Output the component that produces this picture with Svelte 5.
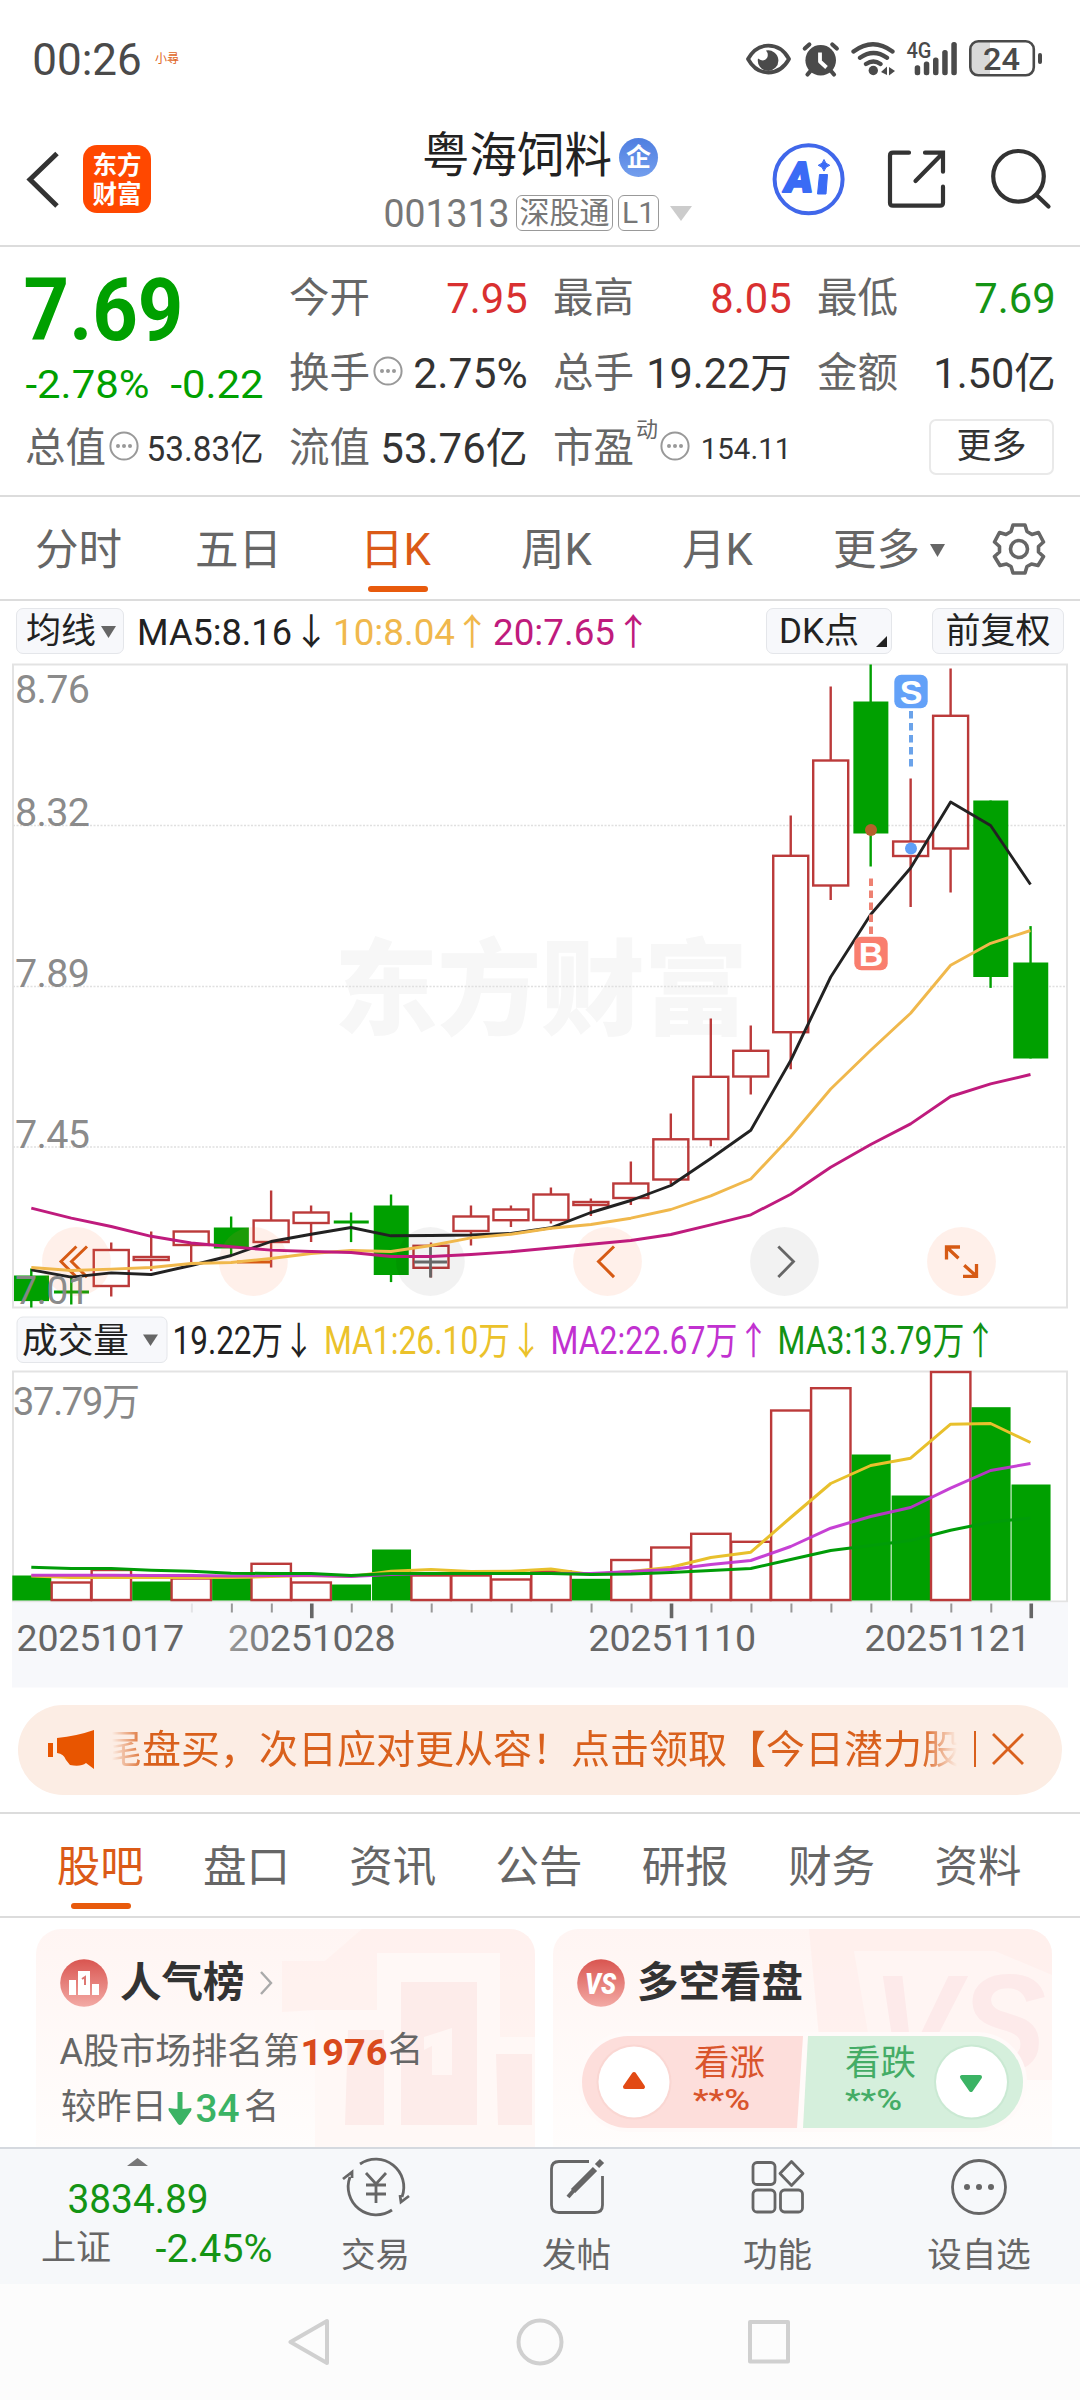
<script>
  const STEP = 39.97;
  const cx = (i) => 31.3 + STEP * i;

  // [high, top, bottom, low, rising]
  const candles = [
    [1268, 1275, 1300.6, 1307, 0], [1275, 1290, 1293, 1304, 0], [1242, 1249.5, 1285.5, 1296, 1],
    [1231, 1256.5, 1259.5, 1270.6, 1], [1231, 1231, 1244.5, 1262, 1], [1216, 1227, 1248, 1254.6, 0],
    [1190, 1220, 1241.5, 1267, 1], [1205, 1212, 1222.5, 1241.6, 1], [1212, 1220, 1223, 1241.6, 0],
    [1194, 1205, 1274.5, 1281.6, 0], [1242, 1245.3, 1267.3, 1277, 1], [1205, 1216, 1230.5, 1245, 1],
    [1205, 1209, 1219.7, 1226.5, 1], [1187, 1194, 1219.5, 1223, 1], [1198, 1201.5, 1204.5, 1215.5, 1],
    [1161, 1183, 1197.5, 1204.6, 1], [1113, 1138.8, 1179, 1183.6, 1], [1018, 1076.3, 1138.6, 1145.7, 1],
    [1025, 1050.3, 1076, 1094, 1], [815, 855.3, 1031.7, 1068.7, 1], [686, 760, 885, 899.5, 1],
    [664, 701, 833, 866, 0], [778, 841, 855.5, 906.6, 1], [668, 715.3, 848, 892, 1],
    [800, 800, 976.5, 987.4, 0], [925.6, 962, 1058, 1058, 0]
  ];
  const volumes = [1575, 1582, 1569.5, 1581, 1578, 1577.7, 1563.3, 1582, 1584, 1549, 1575, 1575, 1579, 1571, 1578.3, 1559.5, 1547, 1533.3, 1541.3, 1410, 1387.7, 1454, 1495, 1371.5, 1406.7, 1484];
  const sellDays = [0, 3, 5, 8, 9, 14, 21, 22, 24, 25];

  const ma5 = [1269.4, 1276.6, 1272.4, 1274, 1265, 1255, 1241, 1233.7, 1227, 1235.3, 1235, 1234.5, 1233, 1227.3, 1212, 1200, 1185, 1158, 1129.7, 1060, 976.5, 914, 867.5, 801.4, 825, 884];
  const ma10 = [1267, 1270, 1268.6, 1267, 1263, 1262, 1258, 1253, 1250, 1251, 1245, 1237.4, 1233.7, 1227.8, 1224, 1217.7, 1209, 1195.4, 1178.5, 1136, 1088.5, 1049.7, 1012.7, 964.7, 942.8, 930];
  const ma20 = [1207.6, 1217.7, 1226, 1235.8, 1242.5, 1246.3, 1249.6, 1251, 1252, 1256, 1256, 1254, 1251.3, 1247.5, 1243.8, 1240, 1234, 1224.4, 1214.3, 1193.7, 1166.7, 1144, 1123.4, 1096, 1083.4, 1074];
  const vol1 = [1575.5, 1577, 1577, 1577, 1577, 1577, 1576, 1575, 1576, 1570.7, 1569, 1571, 1570.7, 1568.5, 1574, 1571, 1566.7, 1557, 1551.7, 1517, 1483, 1465, 1457.7, 1423.7, 1423, 1442];
  const vol2 = [1574.7, 1574.7, 1574.7, 1575, 1575, 1575.5, 1575, 1575, 1576, 1574, 1573, 1573, 1573, 1573, 1573, 1571, 1569, 1564, 1560, 1546, 1527.7, 1516, 1507, 1487.7, 1470, 1463];
  const vol3 = [1566.7, 1568, 1568, 1569.7, 1570.7, 1572.7, 1573, 1573, 1575, 1573, 1573, 1573, 1573, 1573, 1574, 1573.5, 1572, 1570, 1568, 1559, 1550, 1545, 1540, 1529.7, 1521.7, 1517.5];

  const pts = (ys) => ys.map((y, i) => `${cx(i).toFixed(1)},${y}`).join(' ');

  const ticks = Array.from({ length: 22 }, (_, k) => k + 4);
  const isMajor = (i) => i === 7 || i === 16 || i === 25;
  const dates = [[18, '20251017'], [229.5, '20251028'], [590, '20251110'], [866, '20251121']];
  const priceLabels = [[702, '8.76'], [825, '8.32'], [986, '7.89'], [1147, '7.45'], [1303.5, '7.01']];
  const boardTabs = ['股吧', '盘口', '资讯', '公告', '研报', '财务', '资料'];
</script>

{#snippet fit(text, w, size)}
  <svg class="fit" width={w} height={size}>
    <text x={-size * 0.04} y={size * 0.855} font-size={size} textLength={w + size * 0.08} lengthAdjust="spacingAndGlyphs">{text}</text>
  </svg>
{/snippet}

{#snippet dots()}
  <svg class="dots" width="30" height="30" viewBox="0 0 30 30">
    <circle cx="15" cy="15" r="13.6" fill="none" stroke="#999" stroke-width="2" />
    <g fill="#999"><circle cx="9" cy="15" r="2" /><circle cx="15" cy="15" r="2" /><circle cx="21" cy="15" r="2" /></g>
  </svg>
{/snippet}

<div class="screen">
  <div class="status">
    <div class="clock">{@render fit('00:26', 106, 44.5)}</div>
    <span class="carrier">小尋</span>
    <div class="sysicons">
      <svg width="300" height="40" viewBox="744 38 300 40">
        <path d="M748 58C753 49 760 44.700 768.300 44.700S784 49 789 58C784 67 777 71.500 768.300 71.500S753 67 748 58Z" fill="none" stroke="#4a4a4a" stroke-width="3.800" stroke-linejoin="round" />
        <path d="M766 49.500a10.300 10.300 0 1 1-8 8q6 4 9-0.500 2-4-1-7.500z" fill="#4a4a4a" />
        <circle cx="820.700" cy="59.300" r="15.300" fill="#4a4a4a" />
        <path d="M804.800 47.500l4.500-4M836.800 47.500l-4.500-4M810.500 70l-3 3.500M831 70l3 3.500" fill="none" stroke="#4a4a4a" stroke-width="4.200" stroke-linecap="round" />
        <path d="M820 51.500v9l6.500 6" fill="none" stroke="#fff" stroke-width="3.800" stroke-linejoin="round" />
        <g fill="none" stroke="#4a4a4a" stroke-width="4.300" stroke-linecap="round">
          <path d="M853.500 50.500q19.500-14.500 39 0M860 56.800q13.500-9.500 27 0M866 63q7.500-5 14.500 0" />
        </g>
        <circle cx="873.300" cy="69.500" r="4.700" fill="#4a4a4a" />
        <path d="M881 71l6-5.500v8.500zM889 66v8.500l6-4.500z" fill="#4a4a4a" />
        <text x="906.500" y="57" font-size="22.500" font-weight="500" fill="#4a4a4a" textLength="25" lengthAdjust="spacingAndGlyphs">4G</text>
        <g fill="#4a4a4a">
          <rect x="914.700" y="64.300" width="5.500" height="10" rx="2.500" /><rect x="923.800" y="60.500" width="5.500" height="13.800" rx="2.500" />
          <rect x="933" y="56.500" width="5.500" height="17.800" rx="2.500" /><rect x="942.200" y="49" width="5.500" height="25.300" rx="2.500" />
          <rect x="951.300" y="41" width="5.500" height="33.300" rx="2.500" />
        </g>
        <path d="M979 40.500h11v34h-11q-8 0-8-8V48.500q0-8 8-8z" fill="#d9d9d9" />
        <rect x="970.300" y="40.300" width="63.500" height="34" rx="8" fill="none" stroke="#4a4a4a" stroke-width="2.600" />
        <rect x="1038" y="52" width="4" height="11" rx="2" fill="#4a4a4a" />
        <text x="983" y="68.700" font-size="31" font-weight="500" fill="#4a4a4a" textLength="37" lengthAdjust="spacingAndGlyphs">24</text>
      </svg>
    </div>
  </div>

  <header>
    <svg class="back" width="34" height="60" viewBox="26 150 34 60"><path d="M57 153.500L30 179.500 57 206" fill="none" stroke="#333" stroke-width="5" /></svg>
    <div class="logo"><span>东方</span><span>财富</span></div>
    <div class="title">
      <div class="name">粤海饲料<i>企</i></div>
      <div class="code">
        {@render fit('001313', 123, 38.5)}
        <b class="b3">深股通</b><b class="b2">L1</b>
        <svg width="22" height="15" viewBox="0 0 22 15"><path d="M0 0h22L11 15z" fill="#ccc" /></svg>
      </div>
    </div>
    <svg class="acts" width="284" height="76" viewBox="770 142 284 76">
      <circle cx="808.600" cy="179.300" r="34" fill="none" stroke="#4067ea" stroke-width="4" />
      <text x="785" y="192" font-size="42" font-weight="900" fill="#3a6bf5" stroke="#3a6bf5" stroke-width="2" stroke-linejoin="round" font-style="italic" textLength="28" lengthAdjust="spacingAndGlyphs">A</text>
      <path d="M819.500 174.500h8l-1.500 19.500h-8.500z" fill="#3a6bf5" stroke="#3a6bf5" stroke-linejoin="round" />
      <path d="M824 159.500q1.200 4.600 5.800 5.800-4.600 1.200-5.800 5.800-1.200-4.600-5.800-5.800 4.600-1.200 5.800-5.800z" fill="#3a6bf5" stroke="#3a6bf5" />
      <g fill="none" stroke="#333" stroke-width="4.200" stroke-linecap="round">
        <path d="M909 152.700h-16q-3 0-3 3v47q0 3 3 3h47q3 0 3-3v-16" />
        <path d="M925 152.700h18v19M942 154L915.500 181" />
        <circle cx="1018.500" cy="176.300" r="25.300" /><path d="M1037 195.500L1048.500 206.500" />
      </g>
    </svg>
  </header>

  <section class="quote">
    <div class="main">
      <div class="big">{@render fit('7.69', 153, 87)}</div>
      <div class="chg">{@render fit('-2.78%', 121, 39)}{@render fit('-0.22', 90, 39)}</div>
    </div>
    <div class="cell">今开<span class="v red">{@render fit('7.95', 78, 42)}</span></div>
    <div class="cell">最高<span class="v red">{@render fit('8.05', 78, 42)}</span></div>
    <div class="cell">最低<span class="v green">{@render fit('7.69', 78, 42)}</span></div>
    <div class="cell">换手{@render dots()}<span class="v">{@render fit('2.75%', 111, 42)}</span></div>
    <div class="cell">总手<span class="v">{@render fit('19.22万', 142, 42)}</span></div>
    <div class="cell">金额<span class="v">{@render fit('1.50亿', 119, 42)}</span></div>
    <div class="cell">总值{@render dots()}<span class="v">{@render fit('53.83亿', 114, 35)}</span></div>
    <div class="cell">流值<span class="v">{@render fit('53.76亿', 144, 42)}</span></div>
    <div class="cell">市盈<sup>动</sup>{@render dots()}<span class="v">{@render fit('154.11', 88, 30)}</span></div>
    <div class="cell"><button class="more">更多</button></div>
  </section>

  <nav class="ktabs">
    <span class="t1">分时</span><span class="t2">五日</span><span class="t3 on">日K</span><span class="t4">周K</span><span class="t5">月K</span>
    <span class="t6">更多<svg width="15" height="13" viewBox="0 0 15 13"><path d="M0 0h15L7.500 13z" fill="#666" /></svg></span>
    <svg class="gear" width="54" height="54" viewBox="-27 -27 54 54" fill="none" stroke="#666" stroke-width="3.600" stroke-linejoin="round">
      <path d="M-6-24H6L8-17.500 13-14.500 19.500-16.500 24.500-7 19.500-2.500V3L24.500 7.500 19 16.500 12.500 15 8 17.500 6 24H-6L-8 17.500-12.500 15-19 16.500-24.500 7.500-19.500 3V-2.500L-24.500-7-19.500-16.500-13-14.500-8-17.500Z" />
      <circle r="8.500" />
    </svg>
  </nav>

  <div class="legend">
    <span class="chip c1">均线<svg width="15" height="12" viewBox="0 0 15 12"><path d="M0 0h15L7.500 12z" fill="#666" /></svg></span>
    <div class="mas">
      <svg width="520" height="46" viewBox="134 608 520 46" font-size="36.500">
        <text x="137" y="645" fill="#222" textLength="155" lengthAdjust="spacingAndGlyphs">MA5:8.16</text><text x="293" y="645" fill="#222">↓</text>
        <text x="333" y="645" fill="#f0b84c" textLength="122" lengthAdjust="spacingAndGlyphs">10:8.04</text><text x="454" y="645" fill="#f0b84c">↑</text>
        <text x="493" y="645" fill="#bf1b7d" textLength="122" lengthAdjust="spacingAndGlyphs">20:7.65</text><text x="615" y="645" fill="#bf1b7d">↑</text>
      </svg>
    </div>
    <span class="chip c2">DK点<svg width="11" height="11" viewBox="0 0 11 11"><path d="M11 0v11H0z" fill="#222" /></svg></span>
    <span class="chip c3">前复权</span>
  </div>

  <svg class="chart" width="1080" height="1033" viewBox="0 656.500 1080 1033">
    <defs>
      <linearGradient id="datefade" x1="0" x2="1"><stop offset="0" stop-color="#999" /><stop offset=".35" stop-color="#666" /></linearGradient>
    </defs>
    <rect x="13" y="664" width="1054" height="643" fill="#fff" stroke="#e3e3e3" stroke-width="2" />
    <text x="334" y="1026" font-size="104" font-weight="900" fill="#f7f7f7" textLength="414">东方财富</text>
    <path d="M13 825H1067M13 986H1067M13 1146.500H1067" stroke="#e0e0e0" stroke-width="1.500" stroke-dasharray="2 1.500" />

    {#each candles as [hi, top, bot, lo, up], i}
      {#if up}
        <path d="M{cx(i)} {hi}V{top}M{cx(i)} {bot}V{lo}" stroke="#bb3a3a" stroke-width="2.400" />
        <rect x={cx(i) - 17.5} y={top} width="35" height={bot - top} fill="none" stroke="#bb3a3a" stroke-width="2.400" />
      {:else}
        <path d="M{cx(i)} {hi}V{lo}" stroke="#00a000" stroke-width="2.400" />
        <rect x={cx(i) - 17.3} y={top} width="35" height={bot - top} fill="#00a000" />
      {/if}
    {/each}

    <g fill="#ff7a3c" fill-opacity=".11">
      <circle cx="76.400" cy="1261" r="34.400" /><circle cx="253.400" cy="1261" r="34.400" />
      <circle cx="607.500" cy="1261" r="34.400" /><circle cx="961.500" cy="1261" r="34.400" />
    </g>
    <g fill="#000" fill-opacity=".05"><circle cx="430.400" cy="1261" r="34.400" /><circle cx="784.500" cy="1261" r="34.400" /></g>
    <g fill="none" stroke="#d65a14" stroke-width="3">
      <path d="M76.400 1246L61 1261 76.400 1276.600M87 1246L71.500 1261 87 1276.600M614 1246L598.500 1261 614 1276.600" />
      <path d="M237 1261.500H271" />
      <path d="M960 1246.500H946.500V1259M947 1247L958.500 1257.700M963 1275.800H976.500V1263.500M976 1275.300L964.200 1264.800" stroke-width="3.300" />
    </g>
    <path d="M414 1261.500H447M430.500 1245V1277M778.300 1246L793.500 1261 778.300 1276.600" fill="none" stroke="#666" stroke-width="2.800" />

    <g fill="none" stroke-width="2.900" stroke-linejoin="round">
      <polyline points={pts(ma5)} stroke="#222" />
      <polyline points={pts(ma10)} stroke="#f0b84c" />
      <polyline points={pts(ma20)} stroke="#bf1b7d" />
    </g>

    <path d="M911 710.500V767" stroke="#6ba3ea" stroke-width="4" stroke-dasharray="7.600 4.400" />
    <path d="M871 878V935" stroke="#ee8172" stroke-width="4" stroke-dasharray="7.600 4.400" />
    <circle cx="871" cy="829.500" r="6" fill="#b5602b" /><circle cx="911" cy="848" r="6" fill="#5f9ff8" />
    <rect x="894.300" y="674.300" width="33.400" height="33.400" rx="7" fill="#63a1f8" />
    <rect x="854.300" y="936.300" width="33.400" height="33.400" rx="7" fill="#f97e6e" />
    <g class="mark" font-size="34" font-weight="700" fill="#fff" text-anchor="middle"><text x="911" y="703.300">S</text><text x="871" y="965.300">B</text></g>

    <g font-size="39.500" fill="#888" fill-opacity=".98">
      {#each priceLabels as [y, t]}
        <text x="15" {y} textLength="75" lengthAdjust="spacing">{t}</text>
      {/each}
    </g>

    <rect x="17" y="1316.500" width="150" height="45.500" rx="6" fill="#f7f8fb" stroke="#e4e6ea" />
    <text x="22" y="1352" font-size="35.700" fill="#222">成交量</text>
    <path d="M143 1334h15l-7.500 11.500z" fill="#666" />
    <g font-size="38">
      <text x="172.500" y="1353" fill="#222" textLength="142" lengthAdjust="spacingAndGlyphs">19.22万↓</text>
      <text x="324" y="1353" fill="#ebc22b" textLength="218" lengthAdjust="spacingAndGlyphs">MA1:26.10万↓</text>
      <text x="550.500" y="1353" fill="#c131d0" textLength="219" lengthAdjust="spacingAndGlyphs">MA2:22.67万↑</text>
      <text x="777.500" y="1353" fill="#139213" textLength="219" lengthAdjust="spacingAndGlyphs">MA3:13.79万↑</text>
    </g>

    <rect x="13" y="1371" width="1054" height="230" fill="#fff" stroke="#e3e3e3" stroke-width="2" />
    <text x="13" y="1414" font-size="38" fill="#888" textLength="127">37.79万</text>
    {#each volumes as y, i}
      {#if sellDays.includes(i)}
        <rect x={cx(i) - 19} {y} width="39" height={1600 - y} fill="#00a000" />
      {:else}
        <rect x={cx(i) - 19.6} {y} width="39.400" height={1599.5 - y} fill="#fff" stroke="#bb3a3a" stroke-width="2.400" />
      {/if}
    {/each}
    <g fill="none" stroke-width="3" stroke-linejoin="round">
      <polyline points={pts(vol1)} stroke="#e8c02c" />
      <polyline points={pts(vol2)} stroke="#c131d0" stroke-opacity=".92" />
      <polyline points={pts(vol3)} stroke="#009c08" />
    </g>

    <rect x="12" y="1602" width="1056" height="85" fill="#f7f8fb" />
    {#each ticks as i}
      <rect x={cx(i) + 0.7 - (isMajor(i) ? 1.8 : 1)} y="1603" width={isMajor(i) ? 3.6 : 2} height={isMajor(i) ? 14.7 : 9} fill={i === 4 ? '#e3e3e6' : isMajor(i) ? '#666' : '#999'} />
    {/each}
    <g font-size="37.500" fill="#666">
      {#each dates as [x, t], i}
        <text x={x - 1.5} y="1650.700" textLength={i === 3 ? 166 : 167.500} fill={i === 1 ? 'url(#datefade)' : '#666'}>{t}</text>
      {/each}
    </g>
  </svg>

  <div class="banner">
    <svg width="47" height="40" viewBox="48 1729 47 40" fill="#e85500">
      <path d="M94 1730v39l-8-6q-5 4-16 2l-4-5q-2-6-9-7v-15q20-2 37-8z" /><rect x="48" y="1743" width="5" height="14" />
    </svg>
    <div class="marquee"><span>尾盘买，次日应对更从容！点击领取【今日潜力股</span></div>
    <i></i>
    <svg width="32" height="32" viewBox="0 0 32 32"><path d="M1 1L31 31M31 1L1 31" stroke="#d9601c" stroke-width="2.800" /></svg>
  </div>

  <nav class="board">
    {#each boardTabs as t, i}<span class:on={i === 0}>{t}</span>{/each}
  </nav>

  <div class="cards">
    <div class="card">
      <svg class="deco" width="499" height="218" viewBox="36 1929 499 218">
        <path d="M362 1929H535V2147H315V2010L282 2012V1961H325Z" fill="#ffeeeb" fill-opacity=".6" />
        <path d="M315 2010H377V1953H500V2037H535V2147H315Z" fill="#fff8f6" />
        <g fill="#fdecea"><path d="M401 1982H477V2125H401Z" /><path d="M348 2030H384V2125H345Z" /><path d="M496 2054H532V2125H498Z" /></g>
        <path d="M452 2028V2075H432V2046L424 2050V2037Z" fill="#fff6f4" />
      </svg>
      <div class="ctitle">
        <svg width="48" height="48" viewBox="0 0 48 48">
          <defs><linearGradient id="badge" x1="0" y1="0" x2="0" y2="1"><stop offset="0" stop-color="#d95550" /><stop offset="1" stop-color="#f3aaa5" /></linearGradient></defs>
          <circle cx="24" cy="24" r="23.800" fill="url(#badge)" />
          <path d="M9 21h7v15H9zM18 12h12v24H18zM32 25h7v11h-7z" fill="#fff" /><path d="M22 20l3-2v8" fill="none" stroke="#dd7772" stroke-width="2" />
        </svg>
        人气榜
        <svg class="chev" width="14" height="24" viewBox="0 0 14 24"><path d="M2 1l10 11L2 23" fill="none" stroke="#aaa" stroke-width="2.400" /></svg>
      </div>
      <div class="row r1">{@render fit('A股市场排名第', 237, 36)}<em>{@render fit('1976', 84, 37)}</em><span class="c">名</span></div>
      <div class="row r2"><span class="c">较昨日</span>
        <svg width="24" height="34" viewBox="0 0 24 34"><path d="M12 1V20" stroke="#3bb364" stroke-width="5" /><path d="M1 17q11 2 22 0 1 1 0 3L14 33q-2 2-4 0L1 20q-1-2 0-3z" fill="#3bb364" /></svg>
        <em class="g">{@render fit('34', 41, 38)}</em><span class="c">名</span></div>
    </div>
    <div class="card">
      <svg class="deco" width="499" height="218" viewBox="553 1929 499 218">
        <path d="M809 1929H1052V2080H823Z" fill="#ffeeeb" fill-opacity=".75" />
        <path d="M854 1951H995L1052 1975V2080H876Z" fill="#fff5f3" />
        <text class="vs" x="872" y="2072" font-size="140" font-weight="700" fill="#fdeaea" font-style="italic" textLength="174" lengthAdjust="spacingAndGlyphs">VS</text>
        <rect x="578" y="2032" width="449" height="100" rx="50" fill="#fffaf9" />
        <path d="M628 2036H803L797 2128H628A46 46 0 0 1 628 2036Z" fill="#fddedb" />
        <path d="M808 2036H977A46 46 0 0 1 977 2128H803Z" fill="#d5efdc" />
        <circle cx="634" cy="2082" r="37.500" fill="#f8d2cd" fill-opacity=".6" /><circle cx="971.500" cy="2082" r="37.500" fill="#c3e5cd" fill-opacity=".6" />
        <circle cx="634" cy="2082" r="35.500" fill="#fff" /><circle cx="971.500" cy="2082" r="35.500" fill="#fff" />
        <path d="M634 2074L643 2087H625Z" fill="#e24a14" stroke="#e24a14" stroke-width="4" stroke-linejoin="round" />
        <path d="M971 2090L962 2077H980Z" fill="#3bb364" stroke="#3bb364" stroke-width="4" stroke-linejoin="round" />
        <g font-size="35.500"><text x="694" y="2075" fill="#d9542c">看涨</text><text x="845" y="2075" fill="#44ac66">看跌</text></g>
        <g font-size="29" font-weight="500"><text x="693" y="2110" textLength="57" lengthAdjust="spacingAndGlyphs" fill="#d9542c">**%</text><text x="845" y="2110" textLength="57" lengthAdjust="spacingAndGlyphs" fill="#44ac66">**%</text></g>
      </svg>
      <div class="ctitle">
        <svg width="48" height="48" viewBox="0 0 48 48"><circle cx="24" cy="24" r="23.800" fill="url(#badge)" /><text x="8" y="35" font-size="29" font-weight="900" font-style="italic" fill="#fff" textLength="31" lengthAdjust="spacingAndGlyphs">VS</text></svg>
        多空看盘
      </div>
    </div>
  </div>

  <footer>
    <div class="index">
      <svg width="21" height="8" viewBox="0 0 21 8"><path d="M0 8L10.500 0 21 8z" fill="#777" /></svg>
      <div class="iv">{@render fit('3834.89', 138, 40)}</div>
      <div class="ir"><span>上证</span>{@render fit('-2.45%', 114, 38)}</div>
    </div>
    <div class="item">
      <svg width="68" height="60" viewBox="-34 -30 68 60" fill="none" stroke="#666" stroke-width="2.800">
        <path d="M-16-23A28 28 0 0 1 26 10M16 23A28 28 0 0 1-26-10M-33-8L-24-15-24-9M33 9L25 15 24 8" />
        <path d="M-10-14L0-3 10-14M0-3V16M-10-2H10M-10 7H10" />
      </svg>交易
    </div>
    <div class="item">
      <svg width="56" height="60" viewBox="-28 -30 56 60" fill="none" stroke="#666" stroke-width="2.800">
        <path d="M12-25.500H-18Q-25.500-25.500-25.500-18V18Q-25.500 25.500-18 25.500H18Q25.500 25.500 25.500 18V-11" />
        <path d="M18-18L-4 4" stroke-width="6" /><path d="M-2 2l-7 8" stroke-width="4" /><path d="M20-21l5-5" stroke-width="6" />
      </svg>发帖
    </div>
    <div class="item">
      <svg width="56" height="60" viewBox="-28 -30 56 60" fill="none" stroke="#666" stroke-width="2.800">
        <rect x="-25" y="-24.500" width="22" height="22" rx="4" /><rect x="-25" y="3" width="22" height="22" rx="4" /><rect x="2.500" y="3" width="22" height="22" rx="4" />
        <path d="M13.500-25.500L25-13.500 13.500-1.500 2-13.500Z" stroke-linejoin="round" />
      </svg>功能
    </div>
    <div class="item">
      <svg width="60" height="60" viewBox="-30 -30 60 60"><circle r="26.500" fill="none" stroke="#666" stroke-width="2.800" /><g fill="#666"><circle cx="-12" r="3" /><circle r="3" /><circle cx="12" r="3" /></g></svg>设自选
    </div>
  </footer>

  <div class="sysnav">
    <svg width="504" height="50" viewBox="288 2317 504 50" fill="none" stroke="#d0d0d0" stroke-width="4" stroke-linejoin="round">
      <path d="M327 2321V2363L290.500 2342Z" /><circle cx="540" cy="2342" r="21.500" /><rect x="750" y="2322" width="38" height="39.500" />
    </svg>
  </div>
</div>

<style>
  :global(body) { margin: 0; background: #fff; }
  .screen { width: 1080px; height: 2400px; overflow: hidden; background: #fff; color: #666; font-family: Roboto, "Noto Sans CJK SC", sans-serif; line-height: 1; display: flex; flex-direction: column; }
  .screen > * { flex: none; box-sizing: border-box; }
  svg { display: block; flex: none; }
  .fit { overflow: visible; fill: currentColor; }

  .status { height: 118px; display: flex; align-items: center; padding: 0 36px 0 34px; color: #4a4a4a; }
  .carrier { font-size: 12px; color: #e0661e; margin-left: 15px; }
  .sysicons { margin-left: auto; }

  header { height: 129px; border-bottom: 2px solid #dcdcdc; display: grid; grid-template-columns: 34px 68px 1fr 284px; padding: 0 26px; align-items: start; }
  .back { margin-top: 32px; }
  .logo { margin: 27px 0 0 23px; width: 68px; height: 68px; box-sizing: border-box; padding-top: 3px; border-radius: 14px; background: #ff4800; color: #fff; font-size: 24.500px; font-weight: 700; display: flex; flex-direction: column; align-items: center; justify-content: center; gap: 5px; }
  .title { display: flex; flex-direction: column; margin-left: 257px; padding-top: 14px; }
  .name { font-size: 47.500px; color: #222; display: flex; align-items: center; height: 50px; margin-left: 37px; white-space: nowrap; }
  .name i { font-style: normal; font-weight: 700; font-size: 25px; width: 39px; height: 39px; margin-left: 7px; border-radius: 50%; background: linear-gradient(#4f7ee0, #739eed); color: #fff; display: flex; align-items: center; justify-content: center; }
  .code { display: flex; align-items: center; height: 38px; margin-top: 12px; color: #777; }
  .code b { font-weight: 400; font-size: 30px; height: 36px; border: 1.500px solid #999; border-radius: 6px; box-sizing: border-box; display: flex; align-items: center; justify-content: center; white-space: nowrap; }
  .b3 { width: 97px; margin-left: 8px; }
  .b2 { width: 41px; margin: 0 11px 0 5px; }
  .acts { margin-top: 24px; }

  .quote { height: 250px; border-bottom: 2px solid #dcdcdc; display: grid; grid-template: repeat(3, 75px) / repeat(4, 237px); column-gap: 27px; padding: 13px 26px 0 25px; }
  .main { grid-row: span 2; color: #00a000; display: flex; flex-direction: column; padding-left: 2px; }
  .big { font-weight: 700; padding-top: 6px; height: 105px; box-sizing: border-box; }
  .chg { display: flex; justify-content: space-between; }
  .cell { display: flex; align-items: center; font-size: 40.500px; line-height: 44px; white-space: nowrap; padding-top: 1px; box-sizing: border-box; }
  .v { margin-left: auto; color: #333; }
  .red { color: #d93030; }
  .green { color: #149414; }
  .dots { margin-left: 3px; margin-top: -5px; }
  sup { font-size: 22px; line-height: 1; align-self: flex-start; margin: 8px -1px 0 2px; }
  .more { margin: -3px 0 0 auto; width: 125px; height: 56px; border: 2px solid #e9e9e9; border-radius: 7px; background: #fff; font: 35px/1 Roboto, "Noto Sans CJK SC", sans-serif; color: #333; padding: 0; }

  .ktabs { height: 104px; border-bottom: 2px solid #dcdcdc; display: grid; grid-template-columns: 160px 168px 158px 161px 151px 160px 1fr; align-items: center; padding-left: 35px; font-size: 43.500px; white-space: nowrap; }
  .ktabs span { height: 104px; box-sizing: border-box; padding-top: 3px; display: flex; align-items: center; position: relative; }
  .ktabs .t3 { margin-left: -3px; }
  .t6 svg { margin: 0 0 0 10px; }
  .gear { margin-left: -1px; }
  .on { color: #db5a17; }
  .t3.on::after { content: ""; position: absolute; left: 8px; bottom: 9px; width: 60px; height: 6px; border-radius: 3px; background: #e85a0c; }

  .legend { height: 56px; display: flex; align-items: center; padding: 3px 16px 0; font-size: 35px; color: #222; }
  .chip { height: 46px; box-sizing: border-box; border: 1.500px solid #e4e6ea; border-radius: 7px; background: #f7f8fb; display: flex; align-items: center; white-space: nowrap; padding-top: 2px; }
  .c1 { width: 108px; padding-left: 9px; gap: 5px; }
  .mas { margin-left: 10px; width: 520px; }
  .c2 { width: 126px; margin-left: 112px; padding-left: 12px; justify-content: space-between; padding-right: 4px; }
  .c2 svg { align-self: flex-end; margin-bottom: 6px; }
  .c3 { width: 132px; margin-left: auto; justify-content: center; }
  .mark { font-family: "Liberation Sans", Arial, sans-serif; }

  .banner { margin: 15px 18px 17px; height: 90px; border-radius: 45px; background: #fcede4; display: flex; align-items: center; padding: 0 38px 3px 30px; color: #d9601c; }
  .marquee { margin-left: 17px; width: 845px; height: 50px; overflow: hidden; font-size: 39px; -webkit-mask-image: linear-gradient(90deg, transparent, #000 34px, #000 810px, transparent); mask-image: linear-gradient(90deg, transparent, #000 34px, #000 810px, transparent); }
  .marquee span { display: block; line-height: 53px; margin-left: -9px; white-space: nowrap; }
  .banner i { width: 2px; height: 36px; background: #d9601c; margin: 0 16px 0 17px; }

  .board { height: 106px; border-top: 2px solid #dcdcdc; border-bottom: 2px solid #dcdcdc; display: grid; grid-template-columns: repeat(7, 146.300px); padding-left: 27px; font-size: 43.500px; }
  .board span { position: relative; display: flex; align-items: center; justify-content: center; padding-top: 5px; }
  .board .on::after { content: ""; position: absolute; left: 44px; bottom: 7px; width: 60px; height: 6px; border-radius: 3px; background: #e85a0c; }

  .cards { height: 229px; display: grid; grid-template-columns: 499px 499px; column-gap: 18px; padding: 11px 0 0 36px; }
  .card { position: relative; border-radius: 25px 25px 0 0; overflow: hidden; background: linear-gradient(#fff5f3, #fffdfc); }
  .deco { position: absolute; left: 0; top: 0; }
  .vs { font-family: "Liberation Sans", Arial, sans-serif; }
  .ctitle { position: relative; display: flex; align-items: center; gap: 12px; padding: 30px 0 0 24px; font-size: 41.500px; line-height: 46px; font-weight: 700; color: #333; height: 48px; }
  .chev { margin-left: 2px; }
  .row { position: relative; display: flex; align-items: center; margin-left: 25px; height: 40px; }
  .row .c { font-size: 35.300px; }
  .r1 { margin-top: 24px; }
  .r1 .c { margin-left: 2px; }
  .r2 { margin-top: 17px; }
  .r2 svg { margin-left: 1px; }
  .row em { font-style: normal; font-weight: 700; color: #d94a1c; margin-left: 4px; }
  .row em.g { color: #3bb364; font-weight: 500; }
  .r2 em + .c { margin-left: 6px; }

  footer { height: 137px; border-top: 2px solid #d5d9df; background: #f6f8fa; display: grid; grid-template-columns: 275px 201px 201px 201px 202px; }
  .index { display: flex; flex-direction: column; align-items: center; padding-top: 9px; color: #149414; }
  .iv { margin-top: 13px; }
  .ir { display: flex; align-items: center; justify-content: space-between; width: 230px; margin: 10px 0 0 37px; color: #149414; }
  .ir span { color: #666; font-size: 35px; }
  .item { display: flex; flex-direction: column; align-items: center; gap: 21px; padding-top: 8px; font-size: 34.500px; }

  .sysnav { height: 116px; background: #fcfcfc; display: flex; justify-content: center; padding-top: 33px; }
</style>
